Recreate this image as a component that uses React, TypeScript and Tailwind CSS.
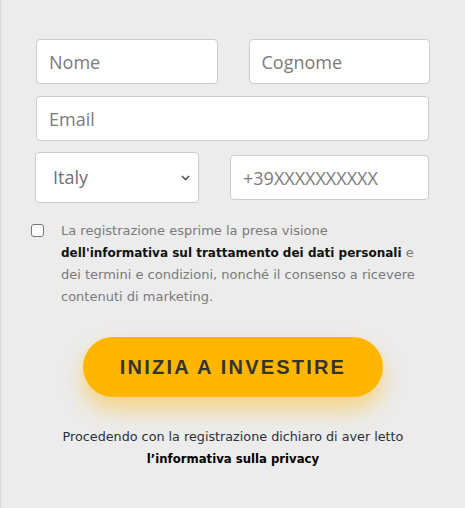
import React from "react";

const field =
  "h-[45px] w-full rounded-[4px] border border-[#cccccc] bg-white px-[12px] text-[18px] text-[#333] placeholder:text-[#7b7b7b] outline-none";

export default function App() {
  return (
    <main className="min-h-[508px] w-[465px] border-l border-[#d9d9d9] bg-[#ececec] font-['Open_Sans',sans-serif]">
      <form className="flex flex-col pt-[39px]">
        <div className="grid grid-cols-2 gap-[31px] pl-[35px] pr-[35px]">
          <input className={field} placeholder="Nome" />
          <input className={field} placeholder="Cognome" />
        </div>
        <div className="mt-[12px] pl-[35px] pr-[36px]">
          <input className={field} placeholder="Email" />
        </div>
        <div className="mt-[11px] flex items-center gap-[31px] pl-[34px] pr-[36px]">
          <div className="relative h-[51px] w-[164px] shrink-0 rounded-[4px] border border-[#cccccc] bg-white">
            <select className="h-full w-full appearance-none bg-transparent pl-[17px] text-[18px] text-[#6f6f6f] outline-none">
              <option>Italy</option>
            </select>
            <svg
              className="pointer-events-none absolute right-[8px] top-1/2 -translate-y-1/2"
              width="9"
              height="6"
              viewBox="0 0 9 6"
              fill="none"
            >
              <path d="M1 1l3.5 3.5L8 1" stroke="#555" strokeWidth="1.6" />
            </svg>
          </div>
          <input className={field} placeholder="+39XXXXXXXXXX" />
        </div>

        <div className="mt-[17px] flex items-start pl-[30px]">
          <span className="mt-[4px] h-[13px] w-[13px] shrink-0 rounded-[3px] border border-[#767676] bg-white" />
          <p className="ml-[17px] whitespace-nowrap font-['DejaVu_Sans',sans-serif] text-[13px] leading-[22px] text-[#7a7a7a]">
            La registrazione esprime la presa visione
            <br />
            <b className="text-[12px] font-bold text-[#111]">dell'informativa sul trattamento dei dati personali</b> e
            <br />
            dei termini e condizioni, nonché il consenso a ricevere
            <br />
            contenuti di marketing.
          </p>
        </div>

        <div className="mt-[29px] flex justify-center">
          <button
            type="button"
            className="h-[60px] w-[300px] rounded-full bg-[#ffb600] font-['Liberation_Sans',Arial,sans-serif] text-[20px] font-bold tracking-[2.2px] text-[#333] shadow-[0_12px_22px_rgba(255,182,0,0.45)]"
          >
            INIZIA A INVESTIRE
          </button>
        </div>

        <p className="mt-[29px] text-center font-['DejaVu_Sans',sans-serif] text-[12.75px] leading-[22px] text-[#2a2f3a]">
          Procedendo con la registrazione dichiaro di aver letto
          <br />
          <b className="text-[11.7px] font-bold text-black">l’informativa sulla privacy</b>
        </p>
      </form>
    </main>
  );
}
